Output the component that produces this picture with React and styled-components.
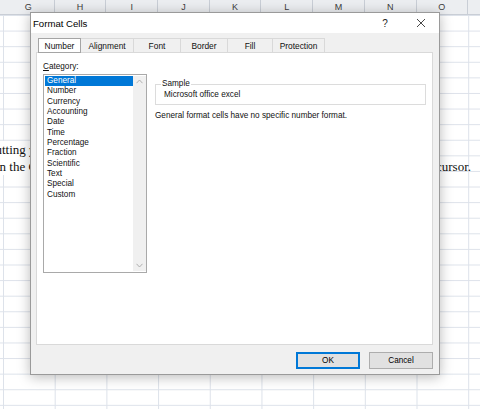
import React from "react";
import styled, { createGlobalStyle } from "styled-components";

const Global = createGlobalStyle`
  html, body { margin: 0; padding: 0; }
  body {
    width: 480px; height: 409px; overflow: hidden;
    font-family: "Liberation Sans", Arial, sans-serif;
    background: #fff;
  }
`;

const Sheet = styled.div`
  position: relative;
  width: 480px;
  height: 409px;
  overflow: hidden;
  background-color: #fff;
`;

const ColHeader = styled.div`
  display: flex;
  height: 15px;
  padding-left: 3px;
  background: #eceef1;
  border-bottom: 1px solid #c9ced6;
  box-sizing: border-box;
`;

const ColCell = styled.div`
  flex: 0 0 51.7px;
  box-sizing: border-box;
  border-right: 1px solid #c9ced6;
  text-align: center;
  font-size: 9px;
  line-height: 15px;
  color: #3c3c3c;
`;

const Grid = styled.div`
  height: 394px;
  background-image:
    linear-gradient(to right, #dde2ea 1px, transparent 1px),
    linear-gradient(to bottom, #dde2ea 1px, transparent 1px);
  background-size: 51.7px 15.6px, 51.7px 15.6px;
  background-position: 3px 0, 0 15.6px;
  padding-top: 126px;
  box-sizing: border-box;
`;

const Prose = styled.div`
  font-family: "Liberation Serif", "Times New Roman", serif;
  font-size: 13px;
  color: #111;
`;

const ProseLine = styled.div`
  display: flex;
  justify-content: space-between;
  height: 17px;
  line-height: 17px;
  white-space: nowrap;
`;

const ProseLeft = styled.span`
  background: #fff;
  margin-left: ${(p) => p.$shift}px;
`;

const ProseRight = styled.span`
  padding-right: 9px;
`;

const Window = styled.div`
  position: absolute;
  left: 30px;
  top: 12px;
  width: 410px;
  height: 363px;
  box-sizing: border-box;
  border: 1px solid #9a9a9a;
  background: #f0f0f0;
  box-shadow: 0 2px 12px rgba(0, 0, 0, 0.28);
  display: flex;
  flex-direction: column;
  font-size: 8.2px;
  color: #111;
`;

const TitleBar = styled.div`
  height: 20px;
  background: #fff;
  display: flex;
  align-items: center;
  padding-left: 2px;
`;

const Title = styled.div`
  flex: 1;
  font-size: 9.6px;
  color: #000;
`;

const TitleButton = styled.div`
  width: 36px;
  height: 20px;
  display: flex;
  align-items: center;
  justify-content: center;
  font-size: 10px;
  color: #222;
`;

const Body = styled.div`
  flex: 1;
  display: flex;
  flex-direction: column;
  padding: 5px 6px 5px 5px;
`;

const TabStrip = styled.div`
  display: flex;
  padding-left: 2px;
  height: 15px;
  position: relative;
  z-index: 1;
`;

const Tab = styled.div`
  width: ${(p) => p.$w}px;
  height: 15px;
  box-sizing: border-box;
  display: flex;
  align-items: center;
  justify-content: center;
  font-size: 8.4px;
  border: 1px solid ${(p) => (p.$active ? "#a5a5a5" : "#d9d9d9")};
  border-left-width: ${(p) => (p.$first || p.$active ? 1 : 0)}px;
  background: ${(p) => (p.$active ? "#fff" : "#f0f0f0")};
`;

const Panel = styled.div`
  flex: 1;
  background: #fff;
  border: 1px solid #d9d9d9;
  margin-top: -1px;
  display: flex;
  padding: 9px 6px 0 6px;
  gap: 8px;
`;

const CategoryCol = styled.div`
  display: flex;
  flex-direction: column;
  width: 104px;
`;

const Label = styled.div`
  height: 11px;
  line-height: 10px;
  margin-bottom: 1px;
  u { text-decoration: underline; }
`;

const ListBox = styled.div`
  height: 199px;
  box-sizing: border-box;
  border: 1px solid #a9a9a9;
  display: flex;
  padding: 1px 0 1px 1px;
`;

const Items = styled.div`
  flex: 1;
  display: flex;
  flex-direction: column;
`;

const Item = styled.div`
  height: 10.35px;
  line-height: 10px;
  padding-left: 2px;
  background: ${(p) => (p.$selected ? "#0078d7" : "transparent")};
  color: ${(p) => (p.$selected ? "#fff" : "#111")};
`;

const ScrollBar = styled.div`
  width: 13px;
  background: #f0f0f0;
  display: flex;
  flex-direction: column;
  justify-content: space-between;
  align-items: center;
  padding: 3px 0;
`;

const RightCol = styled.div`
  flex: 1;
  display: flex;
  flex-direction: column;
  padding-top: 18px;
`;

const SampleBox = styled.fieldset`
  margin: 0;
  padding: 2px 6px 3px 6px;
  border: 1px solid #dcdcdc;
  height: 25px;
  box-sizing: border-box;
  min-width: 0;
  legend {
    padding: 0 1px;
    margin-left: -1px;
    font-size: 8.2px;
    line-height: 8px;
  }
`;

const SampleText = styled.div`
  line-height: 10px;
  padding-left: 2px;
`;

const Description = styled.div`
  margin-top: 6px;
  line-height: 10px;
`;

const Footer = styled.div`
  display: flex;
  justify-content: flex-end;
  gap: 9px;
  padding-top: 7px;
`;

const Button = styled.button`
  width: 64px;
  height: 17px;
  box-sizing: border-box;
  font-family: inherit;
  font-size: 8.2px;
  color: #000;
  background: #e1e1e1;
  border: 1px solid ${(p) => (p.$primary ? "#0078d7" : "#adadad")};
  box-shadow: ${(p) => (p.$primary ? "inset 0 0 0 1px #0078d7" : "none")};
  padding: 0;
`;

const Chevron = ({ up }) => (
  <svg width="7" height="5" viewBox="0 0 7 5">
    <path
      d={up ? "M0.5 4.2 L3.5 1 L6.5 4.2" : "M0.5 0.8 L3.5 4 L6.5 0.8"}
      fill="none"
      stroke="#a8a8a8"
      strokeWidth="0.9"
    />
  </svg>
);

const CloseIcon = () => (
  <svg width="10" height="10" viewBox="0 0 10 10">
    <path d="M1 1 L9 9 M9 1 L1 9" stroke="#333" strokeWidth="0.9" fill="none" />
  </svg>
);

const columns = ["G", "H", "I", "J", "K", "L", "M", "N", "O", ""];
const tabs = [
  ["Number", 43],
  ["Alignment", 53],
  ["Font", 47],
  ["Border", 47],
  ["Fill", 45],
  ["Protection", 52],
];
const categories = [
  "General",
  "Number",
  "Currency",
  "Accounting",
  "Date",
  "Time",
  "Percentage",
  "Fraction",
  "Scientific",
  "Text",
  "Special",
  "Custom",
];

export default function App() {
  return (
    <>
      <Global />
      <Sheet>
        <ColHeader>
          {columns.map((c, i) => (
            <ColCell key={i}>{c}</ColCell>
          ))}
        </ColHeader>
        <Grid>
          <Prose>
            <ProseLine>
              <ProseLeft $shift={-4.5}>utting y</ProseLeft>
            </ProseLine>
            <ProseLine>
              <ProseLeft $shift={-4}>in the C</ProseLeft>
              <ProseRight>cursor.</ProseRight>
            </ProseLine>
          </Prose>
        </Grid>
        <Window>
          <TitleBar>
            <Title>Format Cells</Title>
            <TitleButton>?</TitleButton>
            <TitleButton>
              <CloseIcon />
            </TitleButton>
          </TitleBar>
          <Body>
            <TabStrip>
              {tabs.map(([t, w], i) => (
                <Tab key={t} $w={w} $active={i === 0} $first={i === 0}>
                  {t}
                </Tab>
              ))}
            </TabStrip>
            <Panel>
              <CategoryCol>
                <Label>
                  <u>C</u>ategory:
                </Label>
                <ListBox>
                  <Items>
                    {categories.map((c, i) => (
                      <Item key={c} $selected={i === 0}>
                        {c}
                      </Item>
                    ))}
                  </Items>
                  <ScrollBar>
                    <Chevron up />
                    <Chevron />
                  </ScrollBar>
                </ListBox>
              </CategoryCol>
              <RightCol>
                <SampleBox>
                  <legend>Sample</legend>
                  <SampleText>Microsoft office excel</SampleText>
                </SampleBox>
                <Description>
                  General format cells have no specific number format.
                </Description>
              </RightCol>
            </Panel>
            <Footer>
              <Button $primary>OK</Button>
              <Button>Cancel</Button>
            </Footer>
          </Body>
        </Window>
      </Sheet>
    </>
  );
}
